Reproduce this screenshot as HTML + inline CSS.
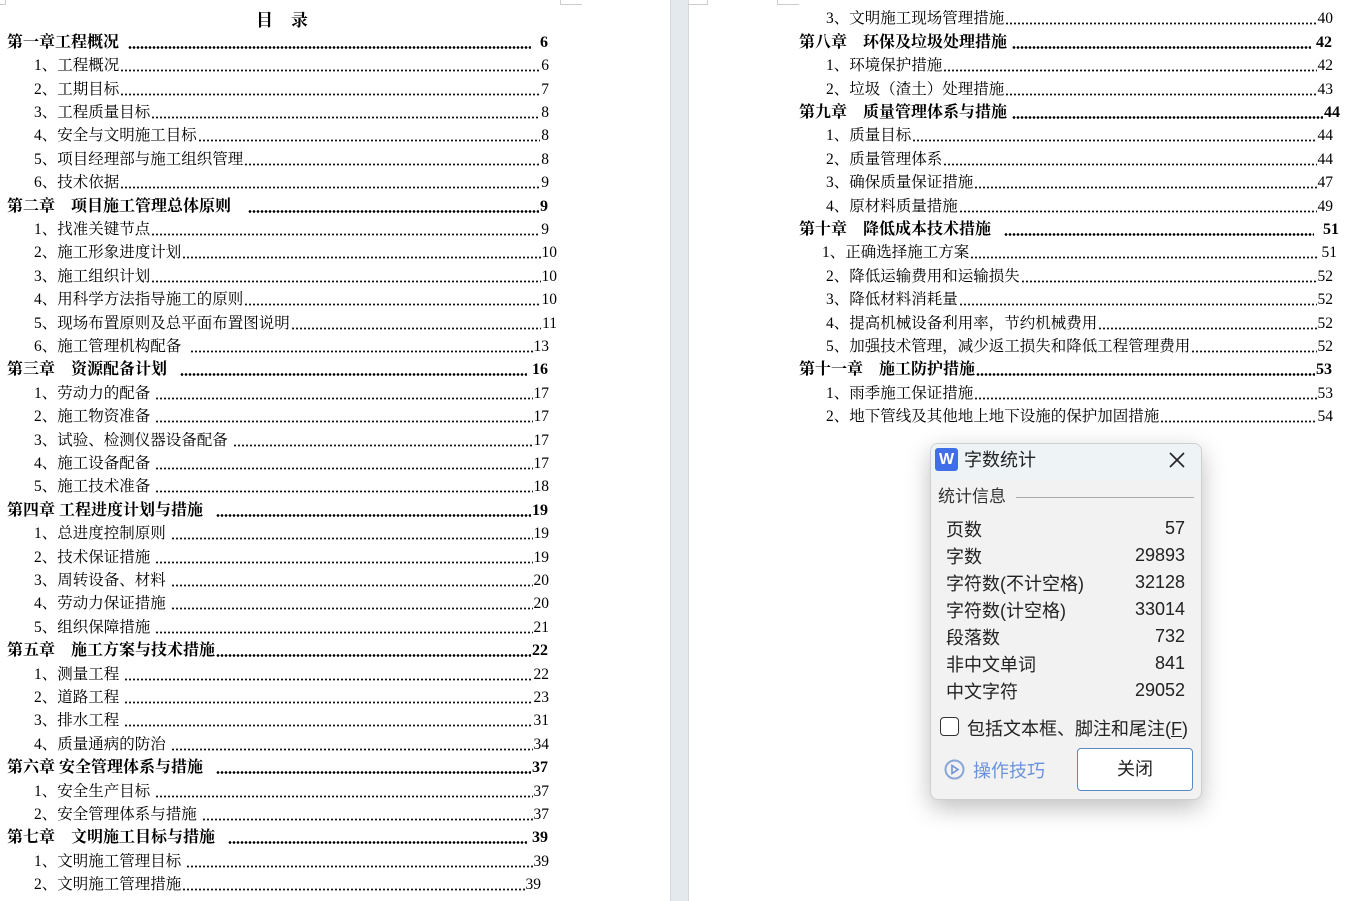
<!DOCTYPE html>
<html><head><meta charset="utf-8"><style>
*{margin:0;padding:0;box-sizing:border-box}
body{width:1353px;height:901px;overflow:hidden;background:#fff;position:relative;font-family:"Liberation Serif","Noto Serif CJK SC",serif;color:#000}
.r{position:absolute;height:22px;line-height:22px;display:flex;align-items:flex-end;font-size:15.5px;white-space:nowrap;margin-top:2px}
.r .t{flex:none}
.r .d{flex:1;margin:0 1px 5px 1px;height:3px;background-image:radial-gradient(circle,#111 0.9px,transparent 1.2px);background-size:4px 3px;background-repeat:repeat-x}
.r .n{flex:none}
.c{font-weight:bold;font-size:16px}
.c .d{background-image:radial-gradient(circle,#000 1.2px,transparent 1.5px)}
.gut{position:absolute;left:670px;top:0;width:19px;height:901px;background:#e3e9ed;border-left:1px solid #d4d9dc;border-right:1px solid #d4d9dc}
.dlg{position:absolute;left:930px;top:443px;width:272px;height:357px;background:#f2f2f2;border:1px solid #cfcfcf;border-radius:8px;box-shadow:0 8px 24px rgba(0,0,0,.25);font-family:"Liberation Sans","Noto Sans CJK SC",sans-serif;overflow:hidden}
.dlg .hd{position:absolute;left:0;top:0;width:100%;height:36px;background:#eef3f6}
.dl{position:absolute;left:15px;font-size:18px;color:#222}
.dv{position:absolute;right:16px;font-size:18px;color:#222;margin-top:2px}
</style></head><body>
<div class="gut"></div>
<div style="position:absolute;left:0;top:0;width:6px;height:5px;border-right:1px solid #ccc;border-bottom:1px solid #ccc"></div>
<div style="position:absolute;left:560px;top:0;width:22px;height:5px;border-left:1px solid #ccc;border-bottom:1px solid #ccc"></div>
<div style="position:absolute;left:688px;top:0;width:20px;height:5px;border-right:1px solid #ccc;border-bottom:1px solid #ccc"></div>
<div style="position:absolute;left:777px;top:0;width:22px;height:5px;border-left:1px solid #ccc;border-bottom:1px solid #ccc"></div>
<div style="position:absolute;left:256px;top:6px;font-weight:bold;font-size:17px;letter-spacing:18px">目录</div>

<div class="r c" style="left:7px;width:541px;top:30px"><span class="t">第一章工程概况&nbsp;&nbsp;</span><span class="d"></span><span class="n">&nbsp;&nbsp;6</span></div>
<div class="r" style="left:34px;width:515px;top:53px"><span class="t">1、工程概况</span><span class="d"></span><span class="n">6</span></div>
<div class="r" style="left:34px;width:515px;top:77px"><span class="t">2、工期目标</span><span class="d"></span><span class="n">7</span></div>
<div class="r" style="left:34px;width:515px;top:100px"><span class="t">3、工程质量目标</span><span class="d"></span><span class="n">8</span></div>
<div class="r" style="left:34px;width:515px;top:123px"><span class="t">4、安全与文明施工目标</span><span class="d"></span><span class="n">8</span></div>
<div class="r" style="left:34px;width:515px;top:147px"><span class="t">5、项目经理部与施工组织管理</span><span class="d"></span><span class="n">8</span></div>
<div class="r" style="left:34px;width:515px;top:170px"><span class="t">6、技术依据</span><span class="d"></span><span class="n">9</span></div>
<div class="r c" style="left:7px;width:541px;top:194px"><span class="t">第二章　项目施工管理总体原则&nbsp;&nbsp;&nbsp;&nbsp;</span><span class="d"></span><span class="n">9</span></div>
<div class="r" style="left:34px;width:515px;top:217px"><span class="t">1、找准关键节点</span><span class="d"></span><span class="n">9</span></div>
<div class="r" style="left:34px;width:523px;top:240px"><span class="t">2、施工形象进度计划</span><span class="d"></span><span class="n">10</span></div>
<div class="r" style="left:34px;width:523px;top:264px"><span class="t">3、施工组织计划</span><span class="d"></span><span class="n">10</span></div>
<div class="r" style="left:34px;width:523px;top:287px"><span class="t">4、用科学方法指导施工的原则</span><span class="d"></span><span class="n">10</span></div>
<div class="r" style="left:34px;width:523px;top:311px"><span class="t">5、现场布置原则及总平面布置图说明</span><span class="d"></span><span class="n">11</span></div>
<div class="r" style="left:34px;width:515px;top:334px"><span class="t">6、施工管理机构配备&nbsp;&nbsp;</span><span class="d"></span><span class="n">13</span></div>
<div class="r c" style="left:7px;width:541px;top:357px"><span class="t">第三章　资源配备计划&nbsp;&nbsp;&nbsp;</span><span class="d"></span><span class="n">&nbsp;16</span></div>
<div class="r" style="left:34px;width:515px;top:381px"><span class="t">1、劳动力的配备&nbsp;</span><span class="d"></span><span class="n">17</span></div>
<div class="r" style="left:34px;width:515px;top:404px"><span class="t">2、施工物资准备&nbsp;</span><span class="d"></span><span class="n">17</span></div>
<div class="r" style="left:34px;width:515px;top:428px"><span class="t">3、试验、检测仪器设备配备&nbsp;</span><span class="d"></span><span class="n">17</span></div>
<div class="r" style="left:34px;width:515px;top:451px"><span class="t">4、施工设备配备&nbsp;</span><span class="d"></span><span class="n">17</span></div>
<div class="r" style="left:34px;width:515px;top:474px"><span class="t">5、施工技术准备&nbsp;</span><span class="d"></span><span class="n">18</span></div>
<div class="r c" style="left:7px;width:541px;top:498px"><span class="t">第四章 工程进度计划与措施&nbsp;&nbsp;&nbsp;</span><span class="d"></span><span class="n">19</span></div>
<div class="r" style="left:34px;width:515px;top:521px"><span class="t">1、总进度控制原则&nbsp;</span><span class="d"></span><span class="n">19</span></div>
<div class="r" style="left:34px;width:515px;top:545px"><span class="t">2、技术保证措施&nbsp;</span><span class="d"></span><span class="n">19</span></div>
<div class="r" style="left:34px;width:515px;top:568px"><span class="t">3、周转设备、材料&nbsp;</span><span class="d"></span><span class="n">20</span></div>
<div class="r" style="left:34px;width:515px;top:591px"><span class="t">4、劳动力保证措施&nbsp;</span><span class="d"></span><span class="n">20</span></div>
<div class="r" style="left:34px;width:515px;top:615px"><span class="t">5、组织保障措施&nbsp;</span><span class="d"></span><span class="n">21</span></div>
<div class="r c" style="left:7px;width:541px;top:638px"><span class="t">第五章　施工方案与技术措施</span><span class="d"></span><span class="n">22</span></div>
<div class="r" style="left:34px;width:515px;top:662px"><span class="t">1、测量工程&nbsp;</span><span class="d"></span><span class="n">22</span></div>
<div class="r" style="left:34px;width:515px;top:685px"><span class="t">2、道路工程&nbsp;</span><span class="d"></span><span class="n">23</span></div>
<div class="r" style="left:34px;width:515px;top:708px"><span class="t">3、排水工程&nbsp;</span><span class="d"></span><span class="n">31</span></div>
<div class="r" style="left:34px;width:515px;top:732px"><span class="t">4、质量通病的防治&nbsp;</span><span class="d"></span><span class="n">34</span></div>
<div class="r c" style="left:7px;width:541px;top:755px"><span class="t">第六章 安全管理体系与措施&nbsp;&nbsp;&nbsp;</span><span class="d"></span><span class="n">37</span></div>
<div class="r" style="left:34px;width:515px;top:779px"><span class="t">1、安全生产目标&nbsp;</span><span class="d"></span><span class="n">37</span></div>
<div class="r" style="left:34px;width:515px;top:802px"><span class="t">2、安全管理体系与措施&nbsp;</span><span class="d"></span><span class="n">37</span></div>
<div class="r c" style="left:7px;width:541px;top:825px"><span class="t">第七章　文明施工目标与措施&nbsp;&nbsp;&nbsp;</span><span class="d"></span><span class="n">&nbsp;39</span></div>
<div class="r" style="left:34px;width:515px;top:849px"><span class="t">1、文明施工管理目标&nbsp;</span><span class="d"></span><span class="n">39</span></div>
<div class="r" style="left:34px;width:507px;top:872px"><span class="t">2、文明施工管理措施</span><span class="d"></span><span class="n">39</span></div>

<div class="r" style="left:826px;width:507px;top:6px"><span class="t">3、文明施工现场管理措施</span><span class="d"></span><span class="n">40</span></div>
<div class="r c" style="left:799px;width:533px;top:30px"><span class="t">第八章　环保及垃圾处理措施&nbsp;</span><span class="d"></span><span class="n">&nbsp;42</span></div>
<div class="r" style="left:826px;width:507px;top:53px"><span class="t">1、环境保护措施</span><span class="d"></span><span class="n">42</span></div>
<div class="r" style="left:826px;width:507px;top:77px"><span class="t">2、垃圾（渣土）处理措施</span><span class="d"></span><span class="n">43</span></div>
<div class="r c" style="left:799px;width:541px;top:100px"><span class="t">第九章　质量管理体系与措施&nbsp;</span><span class="d"></span><span class="n">44</span></div>
<div class="r" style="left:826px;width:507px;top:123px"><span class="t">1、质量目标</span><span class="d"></span><span class="n">44</span></div>
<div class="r" style="left:826px;width:507px;top:147px"><span class="t">2、质量管理体系</span><span class="d"></span><span class="n">44</span></div>
<div class="r" style="left:826px;width:507px;top:170px"><span class="t">3、确保质量保证措施</span><span class="d"></span><span class="n">47</span></div>
<div class="r" style="left:826px;width:507px;top:194px"><span class="t">4、原材料质量措施</span><span class="d"></span><span class="n">49</span></div>
<div class="r c" style="left:799px;width:540px;top:217px"><span class="t">第十章　降低成本技术措施&nbsp;&nbsp;&nbsp;</span><span class="d"></span><span class="n">&nbsp;&nbsp;51</span></div>
<div class="r" style="left:822px;width:515px;top:240px"><span class="t">1、正确选择施工方案</span><span class="d"></span><span class="n">&nbsp;51</span></div>
<div class="r" style="left:826px;width:507px;top:264px"><span class="t">2、降低运输费用和运输损失</span><span class="d"></span><span class="n">52</span></div>
<div class="r" style="left:826px;width:507px;top:287px"><span class="t">3、降低材料消耗量</span><span class="d"></span><span class="n">52</span></div>
<div class="r" style="left:826px;width:507px;top:311px"><span class="t">4、提高机械设备利用率，节约机械费用</span><span class="d"></span><span class="n">52</span></div>
<div class="r" style="left:826px;width:507px;top:334px"><span class="t">5、加强技术管理，减少返工损失和降低工程管理费用</span><span class="d"></span><span class="n">52</span></div>
<div class="r c" style="left:799px;width:533px;top:357px"><span class="t">第十一章　施工防护措施</span><span class="d"></span><span class="n">53</span></div>
<div class="r" style="left:826px;width:507px;top:381px"><span class="t">1、雨季施工保证措施</span><span class="d"></span><span class="n">53</span></div>
<div class="r" style="left:826px;width:507px;top:404px"><span class="t">2、地下管线及其他地上地下设施的保护加固措施</span><span class="d"></span><span class="n">54</span></div>

<div class="dlg">
 <div class="hd"></div>
 <div style="position:absolute;left:4px;top:4px;width:23px;height:23px;background:#3f6ee8;border-radius:3px;color:#fff;font-weight:bold;font-size:16px;text-align:center;line-height:23px">W</div>
 <div style="position:absolute;left:33px;top:4px;font-size:18px;color:#222;line-height:24px">字数统计</div>
 <svg style="position:absolute;left:237px;top:7px" width="18" height="18" viewBox="0 0 18 18"><path d="M2 2L16 16M16 2L2 16" stroke="#222" stroke-width="1.6"/></svg>
 <div style="position:absolute;left:7px;top:41px;font-size:17px;color:#333;line-height:24px">统计信息</div>
 <div style="position:absolute;left:85px;top:53px;width:178px;height:1px;background:#aaa"></div>
 <div class="dl" style="top:72px">页数</div><div class="dv" style="top:72px">57</div>
 <div class="dl" style="top:99px">字数</div><div class="dv" style="top:99px">29893</div>
 <div class="dl" style="top:126px">字符数(不计空格)</div><div class="dv" style="top:126px">32128</div>
 <div class="dl" style="top:153px">字符数(计空格)</div><div class="dv" style="top:153px">33014</div>
 <div class="dl" style="top:180px">段落数</div><div class="dv" style="top:180px">732</div>
 <div class="dl" style="top:207px">非中文单词</div><div class="dv" style="top:207px">841</div>
 <div class="dl" style="top:234px">中文字符</div><div class="dv" style="top:234px">29052</div>
 <div style="position:absolute;left:9px;top:273px;width:19px;height:19px;border:1.5px solid #333;border-radius:4px;background:#fff"></div>
 <div style="position:absolute;left:36px;top:271px;font-size:18px;color:#222">包括文本框、脚注和尾注(<u>F</u>)</div>
 <svg style="position:absolute;left:13px;top:315px" width="21" height="21" viewBox="0 0 21 21"><circle cx="10.5" cy="10.5" r="9" fill="none" stroke="#8aa6d8" stroke-width="2"/><path d="M8 6.5L14 10.5L8 14.5Z" fill="none" stroke="#6f93d8" stroke-width="1.6"/></svg>
 <div style="position:absolute;left:42px;top:313px;font-size:18px;color:#6a92dc">操作技巧</div>
 <div style="position:absolute;left:146px;top:304px;width:116px;height:43px;background:#fff;border:1px solid #5a8ac6;border-radius:4px;text-align:center;line-height:41px;font-size:18px;color:#222">关闭</div>
</div>
</body></html>
